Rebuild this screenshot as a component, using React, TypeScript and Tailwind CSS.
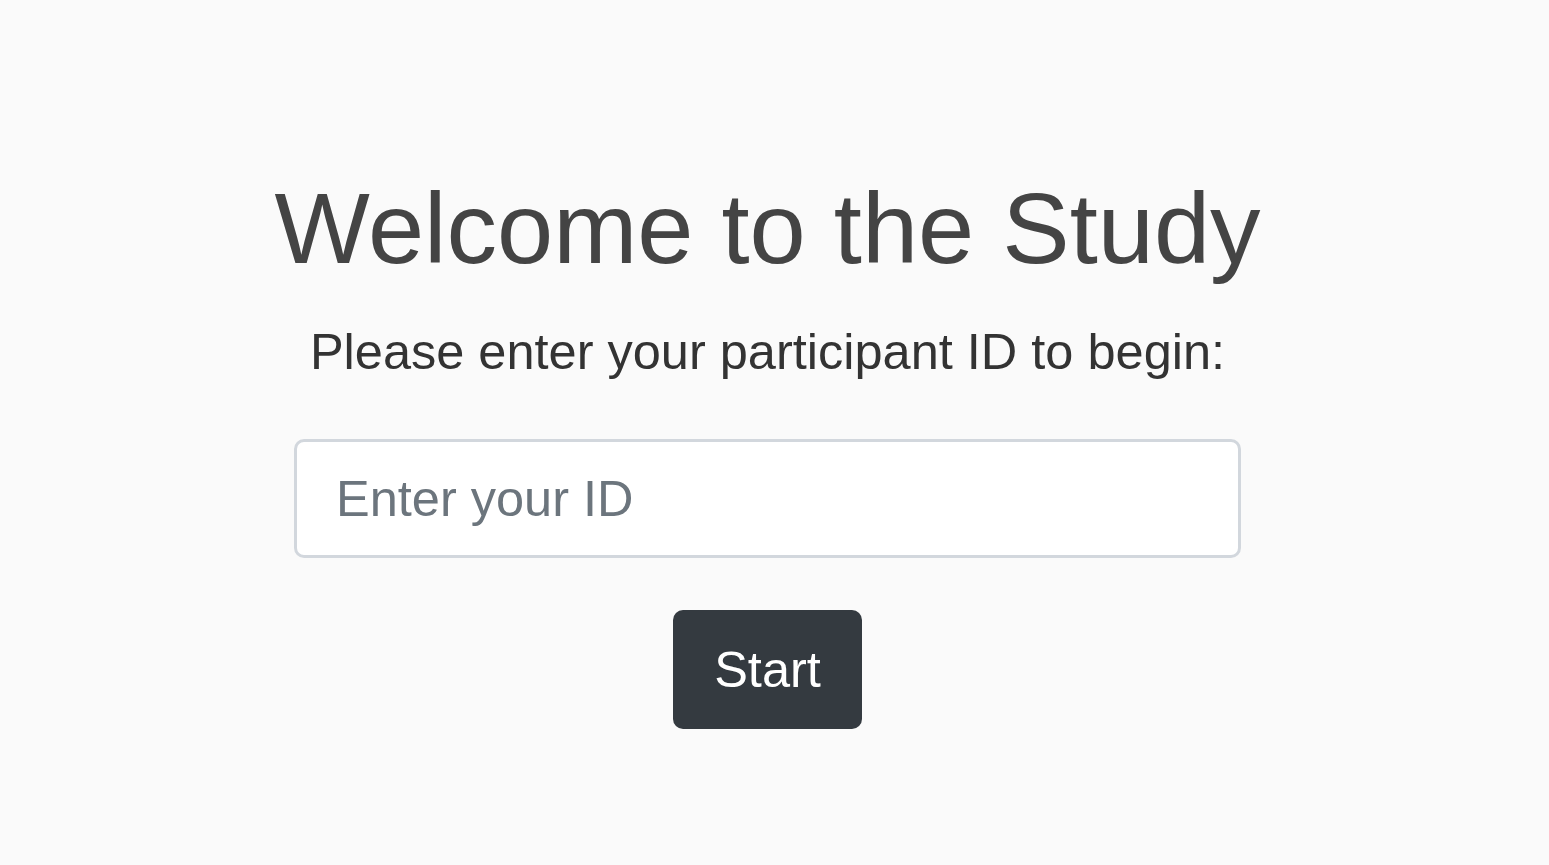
import React from "react";

export default function App() {
  return (
    <div
      className="min-h-[865px] w-full bg-[#fafafa] pr-[14px]"
      style={{ fontFamily: '"Liberation Sans", Arial, sans-serif' }}
    >
      <div className="flex flex-col items-center pt-[168px]">
        <h1 className="m-0 text-[101px] font-normal leading-[120px] text-[#444444]">
          Welcome to the Study
        </h1>
        <p className="mt-[26px] text-[50.5px] leading-[75px] text-[#333333]">
          Please enter your participant ID to begin:
        </p>
        <input
          type="text"
          placeholder="Enter your ID"
          className="mt-[50px] h-[119px] w-[947px] rounded-[10px] border-[3px] border-[#d2d7dd] bg-white px-[39px] text-[50.5px] leading-[75px] text-[#212529] outline-none placeholder:text-[#6c757d]"
          style={{ fontFamily: '"Liberation Sans", Arial, sans-serif' }}
        />
        <button
          type="button"
          className="mt-[52px] h-[119px] w-[189px] rounded-[10px] bg-[#343a40] text-[50.5px] leading-[75px] text-white"
          style={{ fontFamily: '"Liberation Sans", Arial, sans-serif' }}
        >
          Start
        </button>
      </div>
    </div>
  );
}
